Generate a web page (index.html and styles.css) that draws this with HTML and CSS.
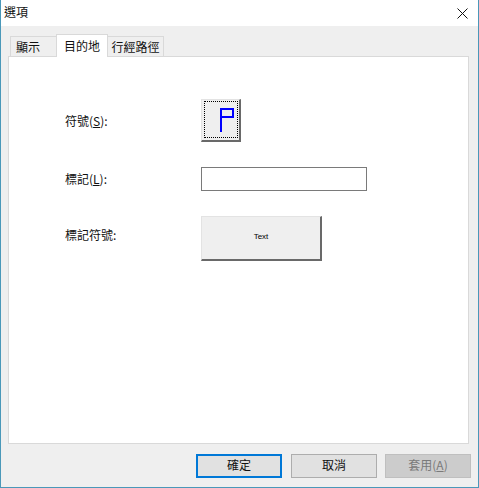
FILE: index.html
```html
<!DOCTYPE html>
<html lang="zh-Hant">

<head>
    <meta charset="UTF-8">
    <title>選項</title>
    <link rel="stylesheet" href="styles.css">
</head>

<body>
    <div class="dialog">
        <!-- Title bar -->
        <header class="titlebar">
            <span class="title">選項</span>
            <svg class="close" width="11" height="11" viewBox="0 0 11 11">
                <path d="M0.5 0.5L10.5 10.5M10.5 0.5L0.5 10.5" stroke="#111" stroke-width="1" fill="none" />
            </svg>
        </header>

        <div class="content">
            <!-- Tabs -->
            <ul class="tabs">
                <li class="tab tab-first">顯示</li>
                <li class="tab active">目的地</li>
                <li class="tab">行經路徑</li>
            </ul>

            <!-- Tab panel -->
            <section class="panel">
                <div class="form-row row-symbol">
                    <label class="field-label">符號(<u>S</u>):</label>
                    <button class="symbol-button" type="button">
                        <span class="focus-ring">
                            <svg width="14" height="24" viewBox="0 0 14 24">
                                <path d="M1 24V1H13V9H1" stroke="#0000ff" stroke-width="2" fill="none" />
                            </svg>
                        </span>
                    </button>
                </div>
                <div class="form-row row-mark">
                    <label class="field-label">標記(<u>L</u>):</label>
                    <input class="mark-input" type="text">
                </div>
                <div class="form-row row-style">
                    <label class="field-label">標記符號:</label>
                    <button class="text-button" type="button">Text</button>
                </div>
            </section>

            <!-- Footer buttons -->
            <footer class="actions">
                <button class="action default" type="button">確定</button>
                <button class="action" type="button">取消</button>
                <button class="action disabled" type="button">套用(<u>A</u>)</button>
            </footer>
        </div>
    </div>
</body>

</html>
```

FILE: styles.css
```css
/* Base Styles */
* {
    margin: 0;
    padding: 0;
    box-sizing: border-box;
}

html,
body {
    height: 100%;
}

body {
    font-family: "Noto Sans CJK TC", "Noto Sans", sans-serif;
    font-size: 12px;
    color: #111;
    overflow: hidden;
}

.dialog {
    height: 488px;
    display: flex;
    flex-direction: column;
    border: 1px solid #4a98b9;
    border-top-width: 0;
    background-color: #efefef;
}

/* Title Bar */
.titlebar {
    height: 26px;
    flex: none;
    background-color: #ffffff;
    display: flex;
    justify-content: space-between;
    align-items: center;
    padding: 0 10px 0 3px;
}

.title {
    line-height: 22px;
    padding-bottom: 2px;
}

/* Tabs */
.content {
    flex: 1;
    display: flex;
    flex-direction: column;
    padding: 8px 9px 0 7px;
}

.tabs {
    display: flex;
    list-style: none;
    height: 23px;
    flex: none;
    padding-left: 2px;
    align-items: flex-end;
    position: relative;
    z-index: 1;
}

.tab {
    height: 21px;
    width: 56px;
    border: 1px solid #d9d9d9;
    border-bottom: 0;
    border-left-width: 0;
    text-align: center;
    line-height: 20px;
}

.tab-first {
    width: 47px;
    border-left-width: 1px;
    padding-right: 11px;
}

.tab.active {
    height: 23px;
    width: 52px;
    background-color: #ffffff;
    border-left-width: 1px;
    margin-left: -1px;
    line-height: 21px;
}

/* Panel */
.panel {
    height: 388px;
    flex: none;
    margin-top: -1px;
    background-color: #ffffff;
    border: 1px solid #d9d9d9;
    padding: 42px 0 0 56px;
}

.form-row {
    display: flex;
    align-items: center;
}

.field-label {
    width: 136px;
    flex: none;
}

.row-mark {
    margin-top: 25px;
}

.row-mark .field-label {
    padding-bottom: 2px;
}

.row-style {
    margin-top: 25px;
    align-items: flex-start;
}

.row-style .field-label {
    line-height: 37px;
}

/* Raised buttons */
.symbol-button,
.text-button {
    background-color: #efefef;
    border: 1px solid;
    border-color: #e3e3e3 #696969 #696969 #e3e3e3;
    border-right-width: 2px;
    border-bottom-width: 2px;
    font-family: inherit;
}

.symbol-button {
    width: 40px;
    height: 43px;
    padding: 1px 1px 2px 2px;
}

.focus-ring {
    display: flex;
    height: 100%;
    align-items: center;
    justify-content: center;
    border: 1px dotted #000;
}

.focus-ring svg {
    margin: 1px 0 0 11px;
}

.text-button {
    width: 121px;
    height: 45px;
    font-family: "Liberation Sans", sans-serif;
    font-size: 8px;
    color: #000;
    padding-bottom: 3px;
}

.mark-input {
    width: 166px;
    height: 24px;
    border: 1px solid #7a7a7a;
    background-color: #ffffff;
}

/* Footer Buttons */
.actions {
    display: flex;
    justify-content: flex-end;
    gap: 8px;
    margin-top: 10px;
    margin-right: -2px;
}

.action {
    width: 86px;
    height: 24px;
    background-color: #e1e1e1;
    border: 1px solid #adadad;
    font-family: inherit;
    font-size: 12px;
    color: #111;
    padding-bottom: 3px;
}

.action.default {
    border: 2px solid #0078d7;
    margin-right: 1px;
}

.action.disabled {
    background-color: #cccccc;
    border-color: #bfbfbf;
    color: #7a7a7a;
}
```
